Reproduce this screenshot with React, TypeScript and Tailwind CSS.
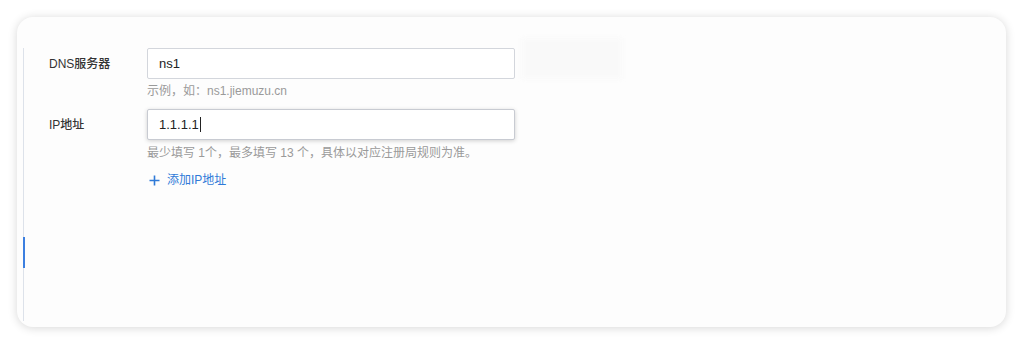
import React from "react";

export default function App() {
  return (
    <div
      className="w-[1024px] h-[344px] bg-white overflow-hidden"
      style={{ fontFamily: '"Liberation Sans", "Noto Sans CJK SC", sans-serif' }}
    >
      <div className="ml-[17px] mt-[17px] w-[989px] h-[310px] rounded-[16px] bg-[#fdfdfd] shadow-[0_1px_10px_rgba(0,0,0,0.16)] flex pl-[5px] pt-[31px] pb-[6px]">
        <div className="w-[3px] flex flex-col items-center">
          <div className="w-px h-[189px] bg-[#dde2ea]" />
          <div className="w-[2px] h-[31px] bg-[#3c7fe0]" />
          <div className="w-px flex-1 bg-[#dde2ea]" />
        </div>
        <div className="flex-1 pl-[24px] flex flex-col">
          <div className="flex items-start h-[31px]">
            <div className="w-[98px] h-[31px] flex items-center text-[12px] text-[#333] font-medium">DNS服务器</div>
            <div className="w-[368px] h-[31px] border border-[#d3d6dc] rounded-[2px] bg-white flex items-center pl-[11px] text-[13px] text-[#222]">ns1</div>
            <div className="ml-[7px] -mt-[10px] w-[100px] h-[41px] bg-[#f9f9f9] blur-[2px]" />
          </div>
          <div className="ml-[98px] mt-[4px] text-[12px] leading-[16px] text-[#9a9a9a]">示例，如：ns1.jiemuzu.cn</div>
          <div className="flex items-start mt-[10px]">
            <div className="w-[98px] h-[31px] flex items-center text-[12px] text-[#333] font-medium">IP地址</div>
            <div className="w-[368px] h-[31px] border border-[#c8cbd2] rounded-[2px] bg-white shadow-[0_1px_4px_rgba(0,0,0,0.18)] flex items-center pl-[11px] text-[13px] text-[#222]">
              <span>1.1.1.1</span>
              <span className="ml-px w-px h-[15px] bg-[#222]" />
            </div>
          </div>
          <div className="ml-[98px] mt-[5px] text-[12px] leading-[16px] text-[#9a9a9a] whitespace-pre">最少填写 1个，最多填写 13 个，具体以对应注册局规则为准。</div>
          <div className="ml-[100px] mt-[11px] flex items-center text-[12px] leading-[16px] text-[#2f7ad8]">
            <svg width="11" height="11" viewBox="0 0 11 11" className="mr-[7px]">
              <path d="M5.5 0.5V10.5M0.5 5.5H10.5" stroke="#2f7ad8" strokeWidth="1.6" />
            </svg>
            <span>添加IP地址</span>
          </div>
        </div>
      </div>
    </div>
  );
}
